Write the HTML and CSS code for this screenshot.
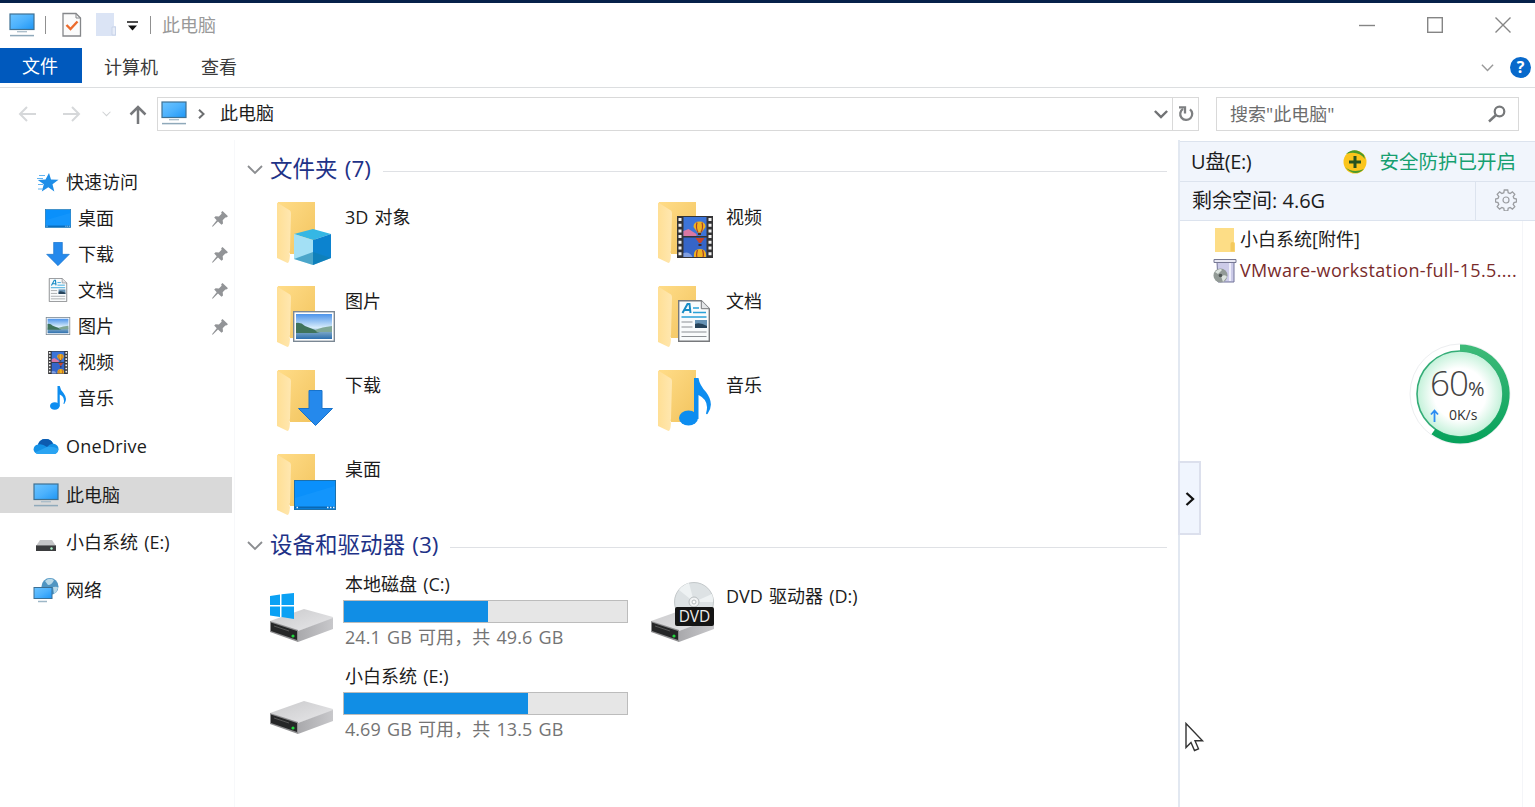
FILE: index.html
```html
<!DOCTYPE html>
<html lang="zh-CN">
<head>
    <meta charset="UTF-8">
    <meta name="viewport" content="width=device-width, initial-scale=1.0">
    <title>此电脑</title>
    <link rel="stylesheet" href="styles.css">
</head>
<body>
    <!-- shared icons -->
    <svg class="defs" width="0" height="0">
        <defs>
            <linearGradient id="screen" x1="0" y1="0" x2="1" y2="1">
                <stop offset="0" stop-color="#6cc4ff"/>
                <stop offset=".5" stop-color="#4db2fd"/>
                <stop offset="1" stop-color="#1e96f5"/>
            </linearGradient>
            <linearGradient id="fold" x1="0" y1="0" x2="1" y2="1">
                <stop offset="0" stop-color="#ffdc88"/>
                <stop offset="1" stop-color="#f2c45e"/>
            </linearGradient>
            <linearGradient id="flap" x1="0" y1="0" x2="1" y2="0">
                <stop offset="0" stop-color="#ffdf95"/>
                <stop offset="1" stop-color="#ffe7b0"/>
            </linearGradient>
            <linearGradient id="sky" x1="0" y1="0" x2="0" y2="1">
                <stop offset="0" stop-color="#4c93ea"/>
                <stop offset=".55" stop-color="#d8edfb"/>
                <stop offset=".7" stop-color="#7fa9c8"/>
                <stop offset="1" stop-color="#2d6fae"/>
            </linearGradient>
            <linearGradient id="metal" x1="0" y1="0" x2="1" y2="1">
                <stop offset="0" stop-color="#c9c9cb"/>
                <stop offset="1" stop-color="#e8e8ea"/>
            </linearGradient>
            <linearGradient id="side" x1="0" y1="0" x2="1" y2="0">
                <stop offset="0" stop-color="#a9a9ac"/>
                <stop offset="1" stop-color="#c8c8cb"/>
            </linearGradient>
            <radialGradient id="glow">
                <stop offset=".6" stop-color="#ffffff"/>
                <stop offset="1" stop-color="#c3f1d9"/>
            </radialGradient>
            <linearGradient id="ring" x1="0" y1="0" x2="0" y2="1">
                <stop offset="0" stop-color="#3dba78"/>
                <stop offset="1" stop-color="#08a25c"/>
            </linearGradient>
        </defs>
        <symbol id="i-pc" viewBox="0 0 26 24">
            <rect x="1" y="1" width="24" height="15.5" fill="url(#screen)" stroke="#3f7193" stroke-width="1.2"/>
            <path d="M8 18.7h10" stroke="#a9bcc9" stroke-width="1.3"/>
            <path d="M1 22.6h24" stroke="#8fa9ba" stroke-width="1.5"/>
        </symbol>
        <symbol id="i-folder" viewBox="0 0 70 70">
            <path d="M10 4h37v52H22L10 30z" fill="url(#fold)"/>
            <path d="M9 4.500l13 8q1 1 1 3L22 53q-1.500 2 0 4-.5 8-2.500 8L9 60z" fill="url(#flap)"/>
        </symbol>
        <symbol id="i-drive" viewBox="0 0 70 64">
            <path d="M2 40l34-12 29 8v2L30 50z" fill="url(#metal)"/>
            <path d="M30 50l35-13v11L30 61z" fill="url(#side)"/>
            <path d="M2 40l28 9v12L2 51z" fill="#8e8e90"/>
            <path d="M3 41.500l26 8.500v9L3 50z" fill="#252627"/>
            <path d="M6 45l15 5" stroke="#555" stroke-width="1"/>
            <circle cx="25" cy="55" r="1.600" fill="#20d63c"/>
        </symbol>
        <symbol id="i-desktop" viewBox="0 0 42 30">
            <rect x=".5" y=".5" width="41" height="29" fill="#0a90fb" stroke="#1b70ac"/>
            <path d="M1 18L41 6v21H1z" fill="#199afe" opacity=".6"/>
            <path d="M1 27.500h40" stroke="#0968b4" stroke-width="2"/>
            <path d="M2.500 27.500h1.500M33 27.500h1.500M36 27.500h1.500M39 27.500h1.500" stroke="#e5f4ff" stroke-width="1.300"/>
        </symbol>
        <symbol id="i-down" viewBox="0 0 35 36">
            <path d="M11 .5h13v18h10.500L17.500 35.500.5 18.500H11z" fill="#2589ec" stroke="#1873cb"/>
        </symbol>
        <symbol id="i-doc" viewBox="0 0 32 42">
            <path d="M.7.7h22.600l8 8v32.600H.7z" fill="#f9fbfc" stroke="#77797c" stroke-width="1.400"/>
            <path d="M23.300.7v8h8" fill="#e4e6e8" stroke="#77797c"/>
            <path d="M4.500 13L9.500 4h2l1 9M6 10h6" fill="none" stroke="#178bc4" stroke-width="2"/>
            <path d="M15 8h6M15 12.500h13M3.500 17h25" stroke="#28a1d8" stroke-width="1.500"/>
            <path d="M3.500 22h11M3.500 27h11M3.500 32h25M3.500 36.500h25" stroke="#8b8f93" stroke-width="1.200"/>
            <rect x="17" y="20" width="12" height="8" fill="#6793b5"/>
            <path d="M17 24q5-2 12 2v2H17z" fill="#27445b"/>
        </symbol>
        <symbol id="i-pic" viewBox="0 0 42 31">
            <rect x=".7" y=".7" width="40.600" height="29.600" fill="#fff" stroke="#7b8894" stroke-width="1.400"/>
            <rect x="3" y="3" width="36" height="25" fill="url(#sky)"/>
            <path d="M3 12q5-1 9 3 8 3 15 6l-4 1H3z" fill="#3f735b"/>
            <path d="M22 19q7-3 17-4v6H24z" fill="#7fa796"/>
        </symbol>
        <symbol id="i-video" viewBox="0 0 36 42">
            <rect width="36" height="42" fill="#343436"/>
            <path d="M3 2v40M33 2v40" stroke="#f1f1f1" stroke-width="3" stroke-dasharray="3 2.700"/>
            <rect x="6.500" y="1" width="23" height="19" fill="#3c74d8"/>
            <rect x="6.500" y="21.500" width="23" height="19.500" fill="#3565c8"/>
            <path d="M6.500 15l5-2 8 5v2h-13z" fill="#d978a3"/>
            <path d="M16.500 11q0-5.500 6-5.500t6 5.500l-4 5.500h-4z" fill="#f0b31f"/>
            <path d="M20 6.500q-1.500 5 1 10M25 6.500q1.500 5-1 10" stroke="#a8402a" stroke-width="1.200" fill="none"/>
            <path d="M21 17h3v2h-3z" fill="#4c2f1b"/>
            <path d="M18.500 22h9l-3.500 5h-2z" fill="#c6452a"/>
            <path d="M21.500 28h3v2h-3z" fill="#3c2a2a"/>
            <path d="M17 41q-1-8 6-8t6 8z" fill="#f0b31f"/>
            <path d="M20.500 34q-1.500 4-.5 7M25.500 34q1.500 4 .5 7" stroke="#a8402a" stroke-width="1.200" fill="none"/>
            <path d="M6.500 37q6-2 9 4h-9z" fill="#819fe0"/>
        </symbol>
        <symbol id="i-music" viewBox="0 0 32 48">
            <ellipse cx="9.500" cy="40" rx="9.500" ry="7.500" fill="#0d8df0"/>
            <path d="M15 0h4.500q1 7 7.500 14 9 12 1.500 22-1 .5-1.500-.5 4-13-7.500-18.500V41H15z" fill="#0d8df0"/>
        </symbol>
        <symbol id="i-pin" viewBox="0 0 16 16">
            <path d="M10.500 0L16 5.300 14.300 6.600l-1-.2-2.600 2.800.3 3.200-1.500 1.400L6 10.500.7 15.800 0 15.200l4.700-6L2.200 6.500l1.400-1.300 3.300.2L9.600 2.700 9.200 1.300z" fill="#929497"/>
        </symbol>
        <symbol id="i-chev" viewBox="0 0 16 10">
            <path d="M1 1l7 7 7-7" fill="none" stroke="currentColor"/>
        </symbol>
    </svg>

    <div class="titlebar">
        <svg class="pc" width="26" height="24"><use href="#i-pc"/></svg>
        <span class="sep"></span>
        <svg class="check" width="20" height="26" viewBox="0 0 20 26">
            <path d="M1 1.500h13l4.500 4.500v18H1z" fill="#fbfbfb" stroke="#85878a" stroke-width="1.300"/>
            <path d="M14 1.500V6h4.500" fill="none" stroke="#85878a"/>
            <path d="M4.500 13l4 4L15.500 9.500" fill="none" stroke="#ec6b2d" stroke-width="2.400"/>
        </svg>
        <svg class="blank" width="20" height="26" viewBox="0 0 20 26">
            <path d="M0 1h18v13h2v10H0z" fill="#dbe4f5"/>
            <path d="M16 23v-8h3.500v8z" fill="#e6ecf8" stroke="#c4cfe4" stroke-width=".8"/>
        </svg>
        <svg class="drop" width="11" height="11" viewBox="0 0 11 11">
            <path d="M0 1h11" stroke="#222" stroke-width="1.600"/>
            <path d="M1 4.500h9L5.500 9.500z" fill="#111"/>
        </svg>
        <span class="sep"></span>
        <span class="title">此电脑</span>
        <div class="controls">
            <svg width="16" height="16" viewBox="0 0 16 16"><path d="M0 8.500h16"/></svg>
            <svg width="16" height="16" viewBox="0 0 16 16"><rect x=".7" y=".7" width="14.600" height="14.600"/></svg>
            <svg width="16" height="16" viewBox="0 0 16 16"><path d="M.5.5l15 15M15.500.5l-15 15"/></svg>
        </div>
    </div>

    <div class="ribbon">
        <div class="tab active">文件</div>
        <div class="tab">计算机</div>
        <div class="tab">查看</div>
        <div class="ribbon-right">
            <svg class="chev" width="13" height="8"><use href="#i-chev"/></svg>
            <span class="help">?</span>
        </div>
    </div>

    <div class="nav">
        <div class="arrows">
            <svg width="20" height="16" viewBox="0 0 20 16"><path d="M18 8H2M9 1L2 8l7 7" fill="none" stroke="#d6d8da" stroke-width="2"/></svg>
            <svg width="20" height="16" viewBox="0 0 20 16"><path d="M1 8h16M10 1l7 7-7 7" fill="none" stroke="#d6d8da" stroke-width="2"/></svg>
            <svg class="chev recent" width="9" height="6"><use href="#i-chev"/></svg>
            <svg width="18" height="19" viewBox="0 0 18 19"><path d="M9 19V2M1.500 9.500L9 2l7.500 7.500" fill="none" stroke="#76787b" stroke-width="2.500"/></svg>
        </div>
        <div class="address">
            <svg class="pc" width="26" height="24"><use href="#i-pc"/></svg>
            <svg class="crumb" width="7" height="10" viewBox="0 0 7 10"><path d="M1 .8L5.500 5 1 9.200" fill="none" stroke="#6c6e70" stroke-width="2"/></svg>
            <span class="path">此电脑</span>
            <svg class="chev open" width="14" height="9"><use href="#i-chev"/></svg>
            <div class="refresh">
                <svg width="16" height="18" viewBox="0 0 16 18">
                    <path d="M12 4.300A6 6 0 1 1 5 3.900" fill="none" stroke="#7d7f81" stroke-width="2.300"/>
                    <path d="M1 2.300h6v6.200" fill="none" stroke="#7d7f81" stroke-width="2.300"/>
                </svg>
            </div>
        </div>
        <div class="search">
            <span>搜索"此电脑"</span>
            <svg width="18" height="18" viewBox="0 0 18 18">
                <circle cx="11.500" cy="6.500" r="4.800" fill="none" stroke="#76787a" stroke-width="2.200"/>
                <path d="M8 10l-7 6.500" stroke="#76787a" stroke-width="2.400"/>
            </svg>
        </div>
    </div>

    <div class="main">
        <div class="sidebar">
            <div class="item">
                <svg width="26" height="24" viewBox="0 0 26 24"><path d="M16 3l2 6.500 7.500.2-6 4.500 1.800 7.300-6-4.200-6.500 4.200 2-7.300-6-4.200 7.700-.5z" fill="#1e8ee8"/><path d="M6 5.500h6M4 8.500h6M5 14.500h5M5 19h5" stroke="#62b3f0" stroke-width="1.200"/></svg>
                <span>快速访问</span>
            </div>
            <div class="item sub"><svg width="26" height="19"><use href="#i-desktop"/></svg><span>桌面</span><svg class="pin" width="16" height="16"><use href="#i-pin"/></svg></div>
            <div class="item sub"><svg width="26" height="24"><use href="#i-down"/></svg><span>下载</span><svg class="pin" width="16" height="16"><use href="#i-pin"/></svg></div>
            <div class="item sub"><svg width="26" height="24"><use href="#i-doc"/></svg><span>文档</span><svg class="pin" width="16" height="16"><use href="#i-pin"/></svg></div>
            <div class="item sub"><svg width="26" height="18"><use href="#i-pic"/></svg><span>图片</span><svg class="pin" width="16" height="16"><use href="#i-pin"/></svg></div>
            <div class="item sub"><svg width="26" height="23"><use href="#i-video"/></svg><span>视频</span></div>
            <div class="item sub"><svg width="26" height="24"><use href="#i-music"/></svg><span>音乐</span></div>
            <div class="item root">
                <svg width="26" height="24" viewBox="0 0 26 24"><path d="M6 20q-5-.5-5.500-4.500Q1 11 5 10.500 7 4.500 13 5q5 0 7 4.500 5.500 1 5.500 5.500-.5 5-5 5z" fill="#1491e6"/><path d="M5 10.500Q7 4.500 13 5q5 0 7 4.500-4 .5-6 3.500-4.500-3.500-9-2.500z" fill="#0d5bb0"/><path d="M2 18.500L14 13q6-1 11.500 2-.5 5-5 5H6q-3 0-4-1.500z" fill="#2aa4f2"/></svg>
                <span class="onedrive">OneDrive</span>
            </div>
            <div class="item root selected"><svg width="26" height="24"><use href="#i-pc"/></svg><span>此电脑</span></div>
            <div class="item root">
                <svg width="26" height="24" viewBox="0 0 26 24"><path d="M7 10h12l4 6H3z" fill="#c5c6c8"/><path d="M3 15h20v6H3z" fill="#3b3c3e"/><path d="M3 15.500h20" stroke="#77787a"/><circle cx="18.500" cy="18.500" r="1.200" fill="#aaf2c8"/></svg>
                <span>小白系统 (E:)</span>
            </div>
            <div class="item root">
                <svg width="26" height="26" viewBox="0 0 26 26"><circle cx="17" cy="9.500" r="8.500" fill="#4f95c2"/><path d="M12 4q4-4 9-1-2 5-6 5zM20 10q5-1 5 1-1 4-4 6z" fill="#b7d8e8"/><rect x="1" y="10.500" width="18" height="11" fill="url(#screen)" stroke="#3b6f94"/><path d="M5 24.500h9" stroke="#9db7c7" stroke-width="1.500"/></svg>
                <span>网络</span>
            </div>
        </div>

        <div class="content">
            <div class="group"><svg class="chev" width="16" height="10"><use href="#i-chev"/></svg><h2>文件夹 (7)</h2><i></i></div>
            <div class="tiles">
                <div class="tile">
                    <svg width="70" height="70"><use href="#i-folder"/>
                        <path d="M26 36l19-5 18 5-18 6z" fill="#35b7e4"/><path d="M26 36l19 6v25l-19-6z" fill="#a3e0f5"/><path d="M45 42l18-6v24l-18 7z" fill="#0c83cf"/><path d="M26 61l19-7 18 6-18 7z" fill="#117fae" opacity=".6"/>
                    </svg>
                    <span>3D 对象</span>
                </div>
                <div class="tile"><svg width="70" height="70"><use href="#i-folder"/><use href="#i-video" x="28" y="18" width="36" height="42"/></svg><span>视频</span></div>
                <div class="tile"><svg width="70" height="70"><use href="#i-folder"/><use href="#i-pic" x="25" y="29" width="42" height="31"/></svg><span>图片</span></div>
                <div class="tile"><svg width="70" height="70"><use href="#i-folder"/><use href="#i-doc" x="29" y="18" width="32" height="42"/></svg><span>文档</span></div>
                <div class="tile"><svg width="70" height="70"><use href="#i-folder"/><use href="#i-down" x="30" y="24" width="35" height="36"/></svg><span>下载</span></div>
                <div class="tile"><svg width="70" height="70"><use href="#i-folder"/><use href="#i-music" x="30" y="12" width="32" height="48"/></svg><span>音乐</span></div>
                <div class="tile"><svg width="70" height="70"><use href="#i-folder"/><use href="#i-desktop" x="26" y="30" width="42" height="30"/></svg><span>桌面</span></div>
            </div>

            <div class="group"><svg class="chev" width="16" height="10"><use href="#i-chev"/></svg><h2>设备和驱动器 (3)</h2><i></i></div>
            <div class="tiles drives">
                <div class="drive">
                    <svg width="70" height="64"><use href="#i-drive"/><path d="M2 15l10-1.500V24H2zM13.500 13.300L26 12v12H13.500zM2 25.500h10V36L2 34.500zM13.500 25.500H26V38l-12.500-2z" fill="#0ba1f4"/></svg>
                    <div class="info">
                        <span>本地磁盘 (C:)</span>
                        <div class="bar"><div class="used" style="width: 51%"></div></div>
                        <span class="free">24.1 GB 可用，共 49.6 GB</span>
                    </div>
                </div>
                <div class="drive dvd">
                    <svg width="70" height="64">
                        <use href="#i-drive"/>
                        <circle cx="45" cy="21" r="19.500" fill="#dde2e4" stroke="#c3c8ca"/>
                        <path d="M45 21L30 9a19 19 0 0 1 10-7zM45 21l18-8a19 19 0 0 1 1 8z" fill="#eef2f3"/>
                        <circle cx="45" cy="21" r="5" fill="#f2f4f5" stroke="#b8bdbf"/>
                        <circle cx="45" cy="21" r="2" fill="#fff" stroke="#b8bdbf"/>
                        <rect x="26" y="26" width="39" height="19" rx="2" fill="#151515"/>
                        <text class="dvd-label" x="45.500" y="41" text-anchor="middle">DVD</text>
                    </svg>
                    <div class="info"><span>DVD 驱动器 (D:)</span></div>
                </div>
                <div class="drive">
                    <svg width="70" height="64"><use href="#i-drive"/></svg>
                    <div class="info">
                        <span>小白系统 (E:)</span>
                        <div class="bar"><div class="used" style="width: 65%"></div></div>
                        <span class="free">4.69 GB 可用，共 13.5 GB</span>
                    </div>
                </div>
            </div>
        </div>

        <div class="usb">
            <div class="usb-head">
                <span class="disk">U盘(E:)</span>
                <svg width="26" height="26" viewBox="0 0 26 26">
                    <circle cx="13" cy="13" r="11.500" fill="#fbc51c"/>
                    <path d="M4 5Q13-3 22 6l1 4Q16 1 4 5zM3 18q8 7 19 2-9 9-19-2z" fill="#4b9a2c"/>
                    <path d="M13 7v12M7 13h12" stroke="#26521f" stroke-width="3"/>
                </svg>
                <span class="safe">安全防护已开启</span>
            </div>
            <div class="usb-space">
                <span>剩余空间: 4.6G</span>
                <div class="gear">
                    <svg width="22" height="22" viewBox="0 0 22 22" fill="none" stroke="#9b9da1">
                        <path d="M9.300 1h3.400l.5 2.700 1.900.8 2.300-1.600 2.400 2.400-1.600 2.300.8 1.900 2.500.5v2.900l-2.500.6-.8 1.900 1.600 2.300-2.400 2.400-2.300-1.600-1.900.8-.5 2.700H9.300l-.5-2.700-1.900-.8-2.300 1.600-2.400-2.400 1.600-2.300-.8-1.900-2.500-.6V10l2.500-.5.8-1.900-1.600-2.300 2.400-2.400 2.300 1.600 1.900-.8z" stroke-width="1.300"/>
                        <circle cx="11" cy="11" r="3" stroke-width="1.200"/>
                    </svg>
                </div>
            </div>
            <div class="files">
                <div class="file">
                    <svg width="24" height="26" viewBox="0 0 24 26"><path d="M2 1h19v14l1 1v9H2z" fill="#fddd86"/><path d="M17.500 24.500V17q0-2 2-2t2 2v7.500z" fill="#f4c95d"/></svg>
                    <span>小白系统[附件]</span>
                </div>
                <div class="file exe">
                    <svg width="24" height="26" viewBox="0 0 24 26"><path d="M4 4h17v20H5z" fill="#cccbe8" stroke="#73749a"/><path d="M1 1.500h22v3H1z" fill="#e9e9f4" stroke="#777994"/><path d="M17 5v18" stroke="#eeeefa" stroke-width="2"/><circle cx="7.500" cy="17.500" r="7" fill="#929a96"/><path d="M2 14q5-5 7-2l-4 4zM8 18q5-2 6 1l-4 5z" fill="#dce3de"/><circle cx="7.500" cy="17.500" r="1.800" fill="#4e5553"/></svg>
                    <span>VMware-workstation-full-15.5....</span>
                </div>
            </div>
            <div class="handle"><svg width="10" height="14" viewBox="0 0 10 14"><path d="M1.500 1L8 7l-6.500 6" fill="none" stroke="#111" stroke-width="2.300"/></svg></div>
        </div>
    </div>

    <!-- floating memory ball -->
    <div class="ball">
        <svg width="104" height="104" viewBox="0 0 104 104">
            <circle cx="52" cy="52" r="50" fill="#fff" stroke="#eceef0"/>
            <circle cx="52" cy="52" r="43" fill="url(#glow)" stroke="#35ad78" stroke-width="1.600"/>
            <path d="M52 6A46 46 0 1 1 25.500 89.500" fill="none" stroke="url(#ring)" stroke-width="7"/>
        </svg>
        <div class="percent">60<small>%</small></div>
        <div class="speed"><svg width="9" height="13" viewBox="0 0 9 13"><path d="M4.500 13V3M1 5.500L4.500 1.500 8 5.500" fill="none" stroke="#2c8df2" stroke-width="1.800"/></svg>0K/s</div>
    </div>

    <svg class="cursor" width="20" height="30" viewBox="0 0 20 30"><path d="M1 1.500v24l5-5 3.500 8 4-1.700-3.500-8h7.500z" fill="#fff" stroke="#333" stroke-width="1.400"/></svg>
</body>
</html>
```
FILE: styles.css
```css
* {
    box-sizing: border-box;
}
body {
    margin: 0;
    height: 807px;
    overflow: hidden;
    display: flex;
    flex-direction: column;
    border-top: 3px solid #06214a;
    background: #fff;
    color: #1c1c1c;
    font-family: "Open Sans", "Noto Sans CJK SC", sans-serif;
    font-size: 18px;
    line-height: 24px;
    white-space: nowrap;
    word-spacing: 1.5px;
}
svg {
    display: block;
    flex: none;
}
.defs {
    position: absolute;
}
.chev {
    stroke-width: 1.8;
}
.titlebar {
    height: 45px;
    display: flex;
    align-items: center;
    padding: 0 0 2px 9px;
}
.sep {
    width: 1px;
    height: 18px;
    margin-left: 10px;
    background: #909090;
}
.check {
    margin-left: 16px;
}
.blank {
    margin-left: 14px;
}
.drop {
    margin: 4px 2px 0 11px;
}
.title {
    margin-left: 11px;
    color: #999;
}
.controls {
    display: flex;
    gap: 52px;
    margin-left: auto;
    padding-right: 24px;
    fill: none;
    stroke: #858585;
    stroke-width: 1.4;
}
.ribbon {
    height: 40px;
    display: flex;
    border-bottom: 1px solid #dcdee0;
}
.tab {
    height: 35px;
    padding: 7px 21px 0 22px;
    color: #3b3b3b;
}
.tab.active {
    width: 82px;
    padding-top: 6px;
    background: #0059bd;
    color: #fff;
}
.ribbon-right {
    display: flex;
    align-items: center;
    gap: 16px;
    margin-left: auto;
    padding-right: 4px;
    color: #999;
}
.help {
    width: 21px;
    height: 21px;
    border-radius: 50%;
    background: #0869cb;
    color: #fff;
    font-size: 16px;
    font-weight: bold;
    line-height: 21px;
    text-align: center;
}
.nav {
    height: 52px;
    display: flex;
    align-items: center;
}
.arrows {
    width: 157px;
    display: flex;
    align-items: center;
    padding-left: 18px;
    gap: 24px;
}
.recent {
    margin: 0 -6px 0 -4px;
    color: #d0d2d4;
}
.address {
    width: 1042px;
    height: 34px;
    display: flex;
    align-items: center;
    padding-left: 3px;
    border: 1px solid #d9d9d9;
}
.address .pc {
    margin-bottom: 2px;
}
.crumb {
    margin: 0 15px 0 11px;
}
.path {
    margin-bottom: 3px;
}
.open {
    margin: 0 4px 0 auto;
    color: #707274;
    stroke-width: 2.8;
}
.refresh {
    width: 26px;
    height: 32px;
    padding: 7px 5px;
    border-left: 1px solid #d9d9d9;
}
.search {
    width: 303px;
    height: 34px;
    display: flex;
    align-items: center;
    justify-content: space-between;
    margin-left: 17px;
    padding: 0 12px 0 13px;
    border: 1px solid #d9d9d9;
    color: #6d6d6d;
}
.main {
    flex: 1;
    min-height: 0;
    display: flex;
}
.sidebar {
    width: 235px;
    padding: 24px 2px 0 0;
    border-right: 1px solid #f7f8fa;
}
.item {
    height: 36px;
    display: flex;
    align-items: center;
    padding-left: 33px;
    gap: 7px;
}
.item.sub {
    padding-left: 45px;
}
.item.root {
    margin-top: 12px;
}
.onedrive {
    letter-spacing: 0.25px;
}
.item.selected {
    margin-top: 13px;
    margin-bottom: -1px;
    background: #d9d9d9;
}
.pin {
    margin: 2px 4px 0 auto;
}
.content {
    width: 943px;
    padding: 10px 11px 0 12px;
}
.group {
    height: 40px;
    display: flex;
    align-items: center;
    color: #8b8d90;
}
.group h2 {
    margin: 0 12px 2px 7px;
    color: #1e3287;
    font-size: 22.5px;
    font-weight: normal;
    line-height: 30px;
}
.group i {
    flex: 1;
    height: 1px;
    margin-top: 2px;
    background: #dfe1e5;
}
.tiles {
    display: grid;
    grid-template-columns: 381px 381px;
    grid-auto-rows: 84px;
    padding-left: 21px;
    margin-top: 4px;
    margin-bottom: -4px;
}
.tile,
.drive {
    display: flex;
    gap: 7px;
}
.tile svg {
    margin-top: 4px;
}
.tile span {
    margin-top: 11px;
}
.drives {
    grid-auto-rows: 92px;
    margin-top: 5px;
}
.drive svg {
    margin-top: 10px;
}
.info {
    width: 283px;
    padding-top: 1px;
}
.info span {
    display: block;
}
.dvd .info {
    padding-top: 13px;
}
.bar {
    height: 23px;
    margin: 4px 0 2px -2px;
    border: 1px solid #bcbcbc;
    background: #e6e6e6;
}
.used {
    height: 100%;
    background: #118ee5;
}
.info .free {
    color: #747474;
    letter-spacing: 0.05px;
}
.dvd-label {
    fill: #eee;
    font-size: 15.5px;
}
.usb {
    position: relative;
    width: 357px;
    border-left: 2px solid #e2e8f1;
}
.usb-head,
.usb-space {
    height: 40px;
    display: flex;
    align-items: center;
    padding-left: 12px;
    border-top: 1px solid #dce3ee;
    background: #f1f5fc;
    font-size: 20px;
    word-spacing: 0;
}
.usb-head {
    height: 40px;
    margin-top: 1px;
    padding-left: 11px;
}
.disk {
    letter-spacing: -0.4px;
}
.usb-head svg {
    margin: 0 11px 0 auto;
}
.safe {
    margin-right: 19px;
    color: #16a070;
    font-size: 19.5px;
}
.usb-space {
    border-bottom: 1px solid #dce3ee;
}
.gear {
    width: 60px;
    height: 38px;
    margin-left: auto;
    padding: 7px 19px;
    border-left: 1px solid #dce3ee;
}
.files {
    width: 343px;
    height: 586px;
    padding: 3px 0 0 33px;
    border-right: 1px solid #f4f5f8;
}
.file {
    height: 31px;
    display: flex;
    align-items: center;
    gap: 3px;
}
.file span {
    margin-bottom: 2px;
}
.exe {
    color: #792b2b;
    letter-spacing: 0.35px;
}
.handle {
    position: absolute;
    left: -2px;
    top: 321px;
    width: 23px;
    height: 74px;
    padding: 29px 0 0 5px;
    border: 2px solid #dce0ed;
    background: #f0f5fe;
}
.ball {
    position: absolute;
    left: 1408px;
    top: 342px;
    width: 104px;
    height: 104px;
}
.percent {
    position: absolute;
    left: 22px;
    top: 21px;
    color: #444;
    font-family: "Open Sans", sans-serif;
    font-size: 35px;
    font-weight: 300;
    line-height: 40px;
    letter-spacing: -1px;
}
.percent small {
    font-size: 20px;
    font-weight: normal;
}
.speed {
    position: absolute;
    left: 22px;
    top: 63px;
    display: flex;
    align-items: center;
    gap: 10px;
    color: #333;
    font-size: 14px;
    line-height: 20px;
}
.cursor {
    position: absolute;
    left: 1185px;
    top: 722px;
}
```
